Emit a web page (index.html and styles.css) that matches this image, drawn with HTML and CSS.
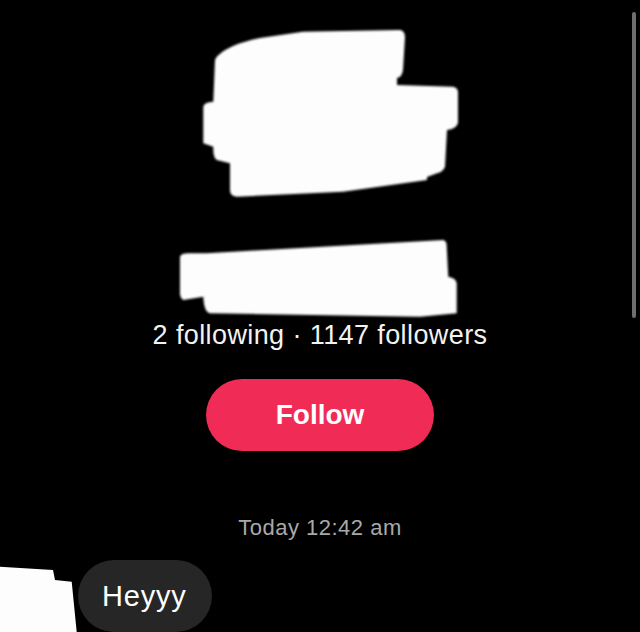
FILE: index.html
```html
<!DOCTYPE html>
<html>
<head>
  <title>Chat</title>
  <link rel="stylesheet" href="styles.css">
</head>
<body>
  <div class="screen">
    <svg class="redact" width="640" height="320" viewBox="0 0 640 320">
      <defs>
        <filter id="soft"><feGaussianBlur stdDeviation="0.8"/></filter>
      </defs>
      <g fill="#fdfdfd" filter="url(#soft)">
        <path d="M216.7,56.7 C225,48 240,42 260,38 L303,31.7 L400,30 Q405,31 405,37 L403,70 Q402,77 397,78 L397,85 L453,86.7 Q458,88 458,92 L458,123 Q456,129 447,130 L445,166.7 Q443,172 437,173.3 L427,177 L427,180 L343,191.7 L236.7,196.7 Q230,196 230,190 L230,163.3 L216.7,160 Q213,158 213.3,146.7 L203.3,143.3 L203.3,106.7 Q204,102 213.3,101.7 L215,60 Z"/>
        <path d="M180,256.7 Q181,253 190,253.3 L206.7,253.3 L443.3,240 Q447,241 446.7,246.7 L448.3,276.7 Q456,278 456.7,283.3 L456.7,313.3 L420,316.7 L210,313.3 Q204,312 203.3,296.7 L183.3,300 Q180,298 180,293.3 Z"/>
      </g>
    </svg>

    <div class="stats">2 following · 1147 followers</div>

    <div class="follow-wrap">
      <button class="follow-btn">Follow</button>
    </div>

    <div class="timestamp">Today 12:42 am</div>

    <div class="message-row">
      <svg class="avatar" width="78" height="72" viewBox="0 0 78 72">
        <path fill="#fdfdfd" d="M0,6.7 L53,10 L55,20 L71.7,21.7 L76.7,72 L0,72 Z"/>
      </svg>
      <div class="bubble">Heyyy</div>
    </div>

    <div class="scrollbar"></div>
  </div>
</body>
</html>
```

FILE: styles.css
```css
html, body {
  margin: 0;
  height: 632px;
  overflow: hidden;
  background: #000;
}

body {
  font-family: "Liberation Sans", Arial, sans-serif;
  color: #fff;
}

.screen {
  position: relative;
  width: 640px;
  height: 632px;
  display: flex;
  flex-direction: column;
}

.redact {
  display: block;
}

.stats {
  text-align: center;
  font-size: 27px;
  line-height: 30px;
  letter-spacing: 0.4px;
  color: #f2f2f2;
}

.follow-wrap {
  display: flex;
  justify-content: center;
  margin-top: 29px;
}

.follow-btn {
  width: 228px;
  height: 72px;
  border: none;
  border-radius: 36px;
  background-color: #f02c56;
  color: #fff;
  font-family: "Liberation Sans", Arial, sans-serif;
  font-size: 28px;
  font-weight: bold;
  cursor: pointer;
}

.timestamp {
  margin-top: 64px;
  text-align: center;
  font-size: 22px;
  line-height: 26px;
  letter-spacing: 0.5px;
  color: #a9a9a9;
}

.message-row {
  display: flex;
  align-items: flex-end;
  margin-top: 19px;
}

.avatar {
  display: block;
}

.bubble {
  height: 72px;
  display: flex;
  align-items: center;
  padding: 0 25px 0 24px;
  border-radius: 36px;
  background-color: #262626;
  font-size: 29px;
  letter-spacing: 0.8px;
}

.scrollbar {
  position: absolute;
  left: 632px;
  top: 12px;
  width: 4px;
  height: 306px;
  border-radius: 2px;
  background-color: #6e6e6e;
}
```
